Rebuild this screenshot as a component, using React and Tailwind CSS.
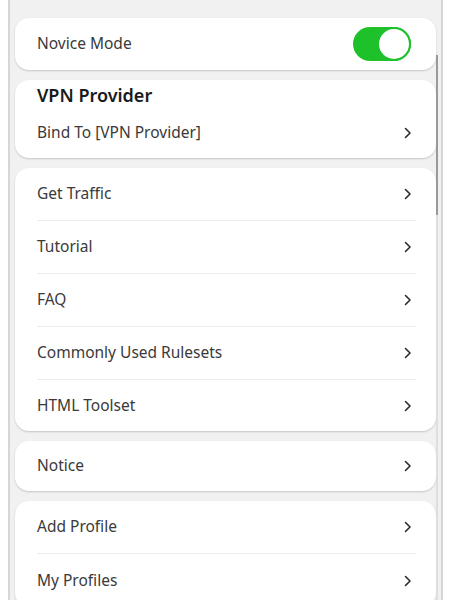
import React from "react";

function Chevron() {
  return (
    <svg width="8" height="12" viewBox="0 0 8 12" fill="none" className="shrink-0">
      <path d="M1.5 1.5 L6 6 L1.5 10.5" stroke="#2b2b2b" strokeWidth="1.6" strokeLinecap="round" strokeLinejoin="round" />
    </svg>
  );
}

function Card({ children, className = "" }) {
  return (
    <div className={`bg-white rounded-[14px] shadow-[0_1px_2px_rgba(0,0,0,0.18)] pl-[22px] ${className}`}>
      {children}
    </div>
  );
}

export default function App() {
  const links = ["Get Traffic", "Tutorial", "FAQ", "Commonly Used Rulesets", "HTML Toolset"];
  return (
    <div className="w-[451px] h-[600px] bg-white overflow-hidden flex" style={{ fontFamily: '"Noto Sans", "Open Sans", sans-serif' }}>
      <div className="relative ml-[8px] w-[435px] h-full bg-[#f1f1f1] border-x-2 border-[#d6d6d6] overflow-hidden">
        {/* scrollbar */}
        <div className="absolute right-[3px] top-[55px] bottom-0 w-[2px] bg-[#dedede]" />
        <div className="absolute right-[3px] top-[55px] h-[160px] w-[2px] bg-[#9a9a9a]" />

        <div className="flex flex-col gap-[10px] pt-[18px] pl-[5px] pr-[5px] text-[15.5px] text-[#3a3a3a]">
          <Card className="flex items-center justify-between h-[52px] pr-[25px]">
            <span>Novice Mode</span>
            <div className="w-[58px] h-[34px] rounded-full bg-[#1fc12b] flex items-center justify-end">
              <div className="w-[34px] h-[34px] rounded-full bg-white border-2 border-[#1fc12b]" />
            </div>
          </Card>

          <Card className="pt-[2px]">
            <div className="text-[18px] font-semibold text-[#1a1a1a] h-[26px] leading-[26px]">VPN Provider</div>
            <div className="mr-[20px]">
              <div className="flex items-center justify-between h-[50px] pr-[4px]">
                <span>Bind To [VPN Provider]</span>
                <Chevron />
              </div>
            </div>
          </Card>

          <Card>
            <div className="mr-[20px]">
              {links.map((l, i) => (
                <div
                  key={l}
                  className={`flex items-center justify-between pr-[4px] ${i < links.length - 1 ? "h-[53px] border-b border-[#ececec]" : "h-[51px]"}`}
                >
                  <span>{l}</span>
                  <Chevron />
                </div>
              ))}
            </div>
          </Card>

          <Card>
            <div className="mr-[20px]">
              <div className="flex items-center justify-between h-[50px] pr-[4px]">
                <span>Notice</span>
                <Chevron />
              </div>
            </div>
          </Card>

          <Card>
            <div className="mr-[20px]">
              <div className="flex items-center justify-between h-[53px] pr-[4px] border-b border-[#ececec]">
                <span>Add Profile</span>
                <Chevron />
              </div>
              <div className="flex items-center justify-between h-[53px] pr-[4px]">
                <span>My Profiles</span>
                <Chevron />
              </div>
            </div>
          </Card>
        </div>
      </div>
    </div>
  );
}
